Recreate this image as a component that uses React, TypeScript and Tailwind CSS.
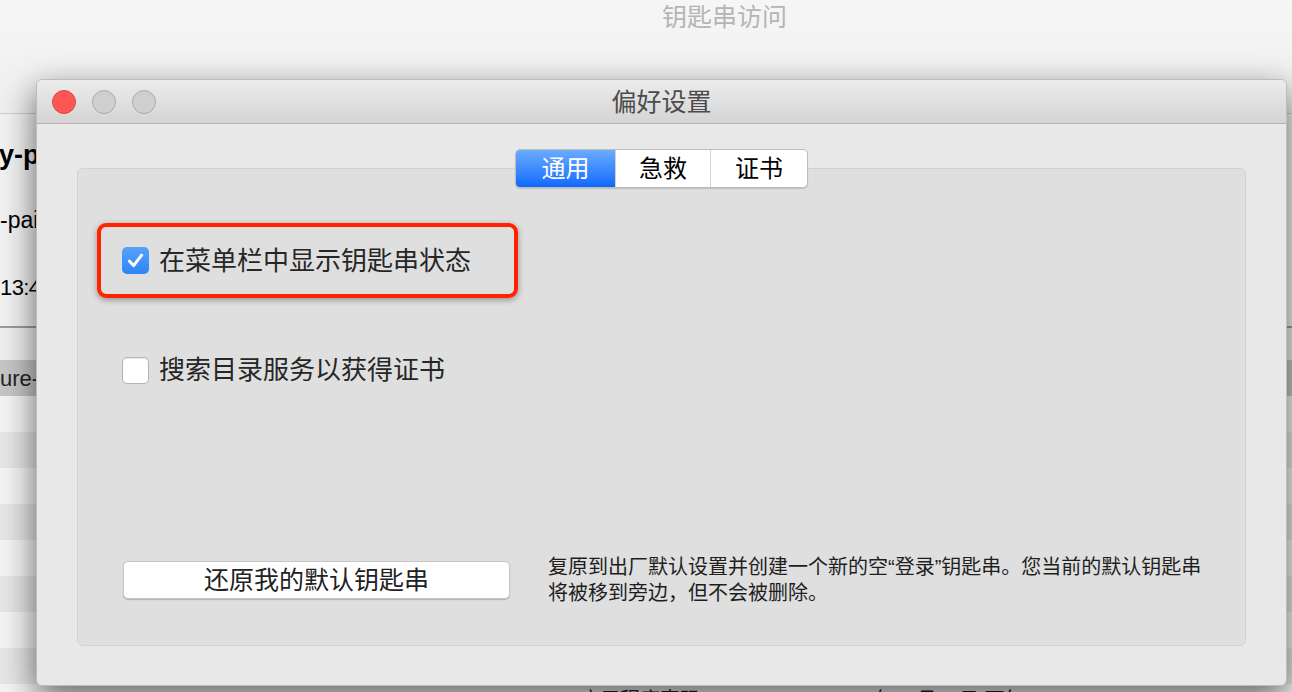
import React from "react";

const rowShades = ["bg-[#f4f4f4]", "bg-[#e6e6e6]"];

function TrafficLight({ color }: { color: "red" | "gray" }) {
  return (
    <span
      className={
        color === "red"
          ? "h-[24px] w-[24px] rounded-full border border-[#e0443e] bg-[#fc5753]"
          : "h-[24px] w-[24px] rounded-full border border-[#ababab] bg-[#cfcfcf]"
      }
    />
  );
}

function Checkbox({ checked }: { checked: boolean }) {
  if (checked)
    return (
      <span className="flex h-[27px] w-[27px] shrink-0 items-center justify-center rounded-[5px] bg-gradient-to-b from-[#55a2f9] to-[#2d84f5]">
        <svg width="27" height="27" viewBox="0 0 27 27" fill="none">
          <path d="M7.5 14.2 L11.6 18.6 L19.6 8.2" stroke="white" strokeWidth="3" strokeLinecap="round" strokeLinejoin="round" />
        </svg>
      </span>
    );
  return <span className="h-[27px] w-[27px] shrink-0 rounded-[5px] border border-[#b4b4b4] bg-white shadow-[inset_0_1px_1px_rgba(0,0,0,0.08)]" />;
}

export default function App() {
  return (
    <div className="relative h-[692px] w-[1292px] overflow-hidden bg-[#eeeeee] font-['Liberation_Sans','Noto_Sans_CJK_SC',sans-serif] text-[#222]">
      {/* keychain access window behind */}
      <div className="flex h-[114px] border-b border-[#cdcdcd] bg-gradient-to-b from-[#f6f6f6] to-[#efefef] pl-[662px] pt-[1px]">
        <span className="text-[25px] leading-[32px] text-[#b5b5b5]">钥匙串访问</span>
      </div>
      <div className="flex h-[212px] flex-col whitespace-nowrap bg-[#f2f2f2] text-black">
        <div className="mt-[25px] -ml-[1px] text-[27px] font-bold leading-[32px]">y-pair</div>
        <div className="mt-[33px] text-[23px] leading-[32px]">-pair</div>
        <div className="mt-[36px] text-[22px] leading-[32px] tracking-[-0.6px]">13:42</div>
      </div>
      <div className="h-[2px] bg-[#9b9b9b]" />
      <div className="h-[32px] bg-[#efefef]" />
      <div className="flex h-[36px] items-center bg-[#c6c6c6] text-[22px] whitespace-nowrap">ure-v</div>
      {[0, 1, 2, 3, 4, 5, 6, 7].map((i) => (
        <div key={i} className={"h-[36px] " + rowShades[i % 2]} />
      ))}
      <div className="flex h-[36px] items-start bg-[#f4f4f4] pt-[4px] text-[20px] leading-[24px] whitespace-nowrap">
        <span className="ml-[580px] w-[250px]">应用程序密码</span>
        <span>2016年10月20日 下午3:08:42</span>
      </div>

      {/* preferences window */}
      <div className="absolute left-[36px] top-[79px] flex h-[607px] w-[1251px] flex-col overflow-hidden rounded-[6px] border border-[#bdbdbd] bg-[#e8e8e8] shadow-[0_12px_34px_rgba(0,0,0,0.6)]">
        <div className="grid h-[44px] shrink-0 grid-cols-[1fr_auto_1fr] items-center border-b border-[#b4b4b4] bg-gradient-to-b from-[#ececec] to-[#d4d4d4]">
          <div className="flex gap-[16px] pl-[15px]">
            <TrafficLight color="red" />
            <TrafficLight color="gray" />
            <TrafficLight color="gray" />
          </div>
          <span className="text-[25px] leading-[32px] text-[#4b4b4b]">偏好设置</span>
          <div />
        </div>

        <div className="flex flex-1 flex-col px-[40px] pt-[44px] pb-[39px]">
          <div className="flex flex-1 flex-col rounded-[6px] border border-[#d2d2d2] bg-[#dfdfdf]">
            <div className="-mt-[20px] flex h-[39px] self-center overflow-hidden rounded-[5px] border border-[#bdbdbd] bg-white text-[24px] leading-[30px] shadow-[0_1px_1px_rgba(0,0,0,0.15)]">
              <span className="flex w-[99px] items-center justify-center bg-gradient-to-b from-[#6aabfd] to-[#0a68fe] text-white">通用</span>
              <span className="flex w-[95px] items-center justify-center border-l border-[#d3d3d3] text-black">急救</span>
              <span className="flex w-[97px] items-center justify-center border-l border-[#d3d3d3] text-black">证书</span>
            </div>

            <div className="mt-[35px] ml-[19px] flex h-[75px] w-[421px] items-center rounded-[9px] border-[4px] border-[#ff2300] pl-[21px] shadow-[0_2px_6px_rgba(0,0,0,0.35)]">
              <Checkbox checked />
              <span className="ml-[10px] text-[26px] leading-[32px] text-[#262626]">在菜单栏中显示钥匙串状态</span>
            </div>

            <div className="mt-[58px] ml-[44px] flex h-[28px] items-center">
              <Checkbox checked={false} />
              <span className="ml-[10px] text-[26px] leading-[32px] text-[#262626]">搜索目录服务以获得证书</span>
            </div>

            <div className="mt-auto mb-[39px] ml-[45px] flex items-center">
              <button className="flex h-[38px] w-[387px] items-center justify-center rounded-[5px] border border-[#c6c6c6] bg-white text-[25px] leading-[30px] text-[#222] shadow-[0_1px_1px_rgba(0,0,0,0.2)]">
                还原我的默认钥匙串
              </button>
              <div className="ml-[38px] text-[20px] leading-[26px] whitespace-nowrap text-[#1e1e1e]">
                <div>复原到出厂默认设置并创建一个新的空“登录”钥匙串。您当前的默认钥匙串</div>
                <div>将被移到旁边，但不会被删除。</div>
              </div>
            </div>
          </div>
        </div>
      </div>
    </div>
  );
}
